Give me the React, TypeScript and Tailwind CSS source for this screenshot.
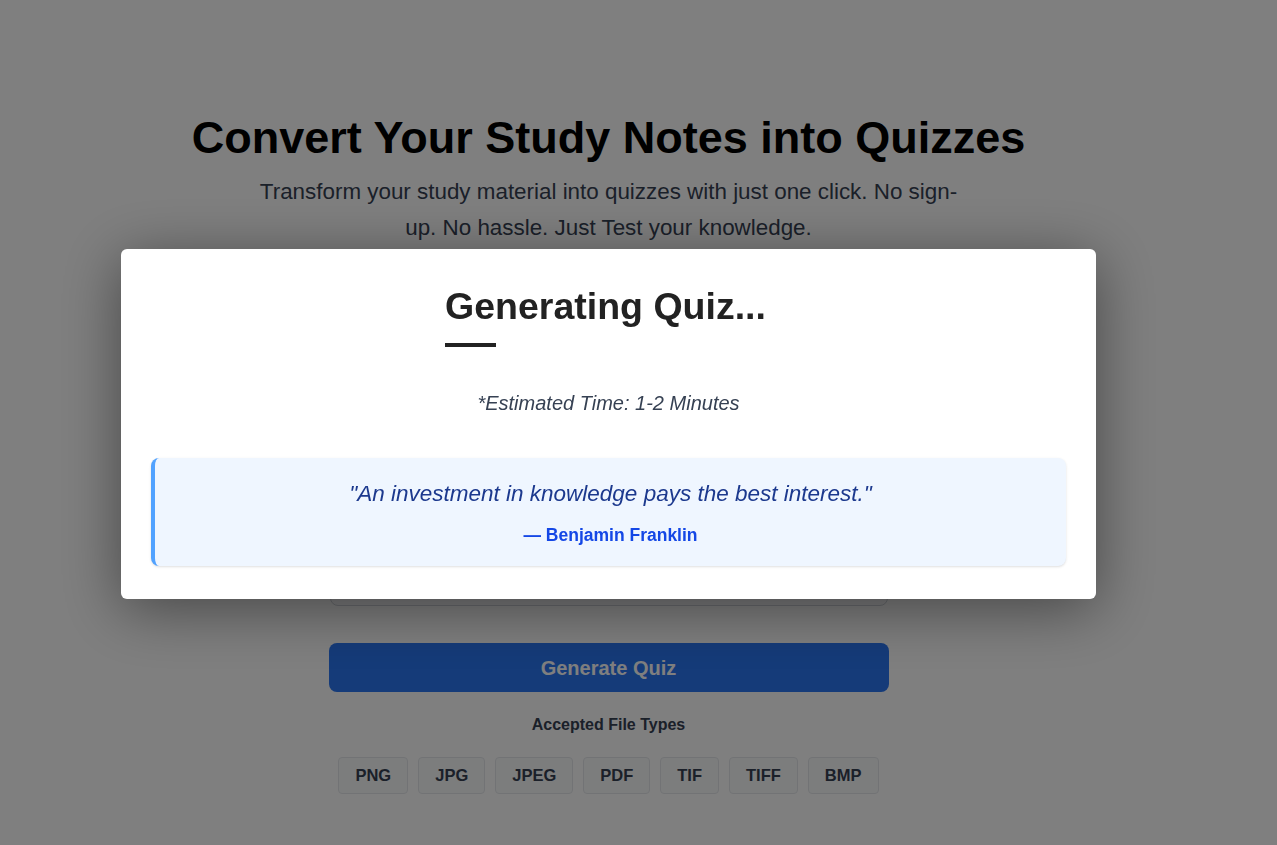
import React from 'react'

const fileTypes = ['PNG', 'JPG', 'JPEG', 'PDF', 'TIF', 'TIFF', 'BMP']

const App = () => {
  return (
    <div className="relative min-h-[845px] bg-white font-['Liberation_Sans',Arial,sans-serif]">
      {/* page behind the modal */}
      <main className="w-[1217px] flex flex-col items-center pt-[111px]">
        <h1 className="text-[45px] leading-[53px] font-bold text-black">Convert Your Study Notes into Quizzes</h1>
        <p className="mt-[10px] max-w-[712px] text-center text-[22.4px] leading-[36px] text-gray-700">
          Transform your study material into quizzes with just one click. No sign-up. No hassle. Just Test your knowledge.
        </p>

        <div className="mt-[24px] w-[558px] h-[336px] rounded-lg border border-gray-300 bg-gray-50"></div>

        <button className="mt-[37px] w-[560px] h-[49px] rounded-lg bg-[#2a76f2] text-white text-[20px] font-bold">
          Generate Quiz
        </button>

        <div className="mt-[21px] text-base font-bold text-gray-700">Accepted File Types</div>

        <div className="mt-[20px] flex gap-[10px]">
          {fileTypes.map((t) => (
            <span
              key={t}
              className="h-[37px] px-4 flex items-center rounded border border-gray-200 bg-gray-50 text-[16.5px] font-bold text-gray-700"
            >
              {t}
            </span>
          ))}
        </div>
      </main>

      {/* overlay */}
      <div className="fixed inset-0 bg-black/50 flex items-center pl-[121px] pt-[2px]">
        <div className="w-[975px] h-[350px] bg-white rounded-md shadow-[0_10px_60px_rgba(0,0,0,0.45)] px-[30px] pt-[36px] flex flex-col">
          <div className="self-center flex flex-col -ml-[6px]">
            <h2 className="text-[37.5px] leading-[43px] font-bold text-[#222]">Generating Quiz...</h2>
            <div className="mt-[15px] w-[51px] h-[4px] bg-[#222]"></div>
          </div>

          <p className="mt-[42px] text-center text-[20px] leading-[28px] italic text-gray-700">
            *Estimated Time: 1-2 Minutes
          </p>

          <div className="mt-[41px] rounded-lg border-l-4 border-blue-400 bg-blue-50 shadow-sm pt-[21px] pb-[19px] text-center">
            <p className="text-[22.5px] leading-[30px] italic text-blue-900">
              "An investment in knowledge pays the best interest."
            </p>
            <p className="mt-[14px] text-[17.5px] leading-[24px] font-bold text-blue-700">— Benjamin Franklin</p>
          </div>
        </div>
      </div>
    </div>
  )
}

export default App
